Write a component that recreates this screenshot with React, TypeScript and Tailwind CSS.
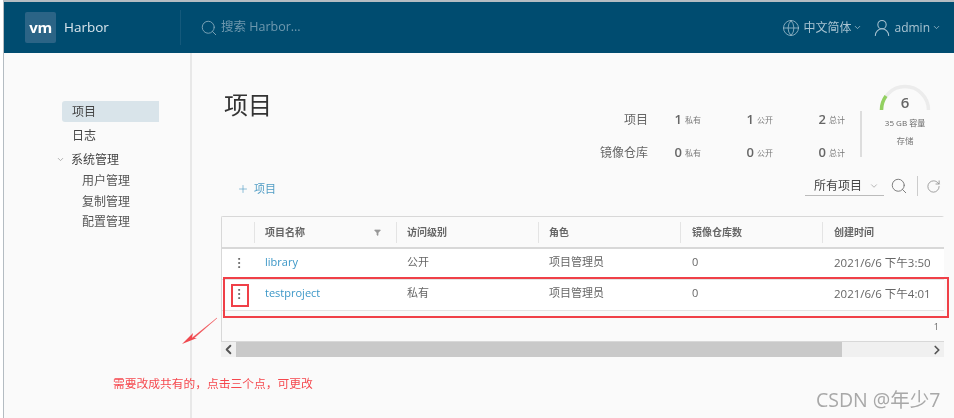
import { ChevronDown, ChevronLeft, ChevronRight, EllipsisVertical, Filter, Globe, Plus, RotateCw, Search, UserRound } from 'lucide-react';

const FONT = "font-['Open_Sans','Noto_Sans_CJK_SC',sans-serif]";

const COLS = ['w-[32px]', 'w-[142px]', 'w-[142px]', 'w-[142px]', 'w-[142px]', 'w-[122px]'];

const HEADERS = ['', '项目名称', '访问级别', '角色', '镜像仓库数', '创建时间'];

const ROWS = [
  { name: 'library', level: '公开', time: '2021/6/6 下午3:50' },
  { name: 'testproject', level: '私有', time: '2021/6/6 下午4:01' },
];

function StatRow({ label, values }: { label: string; values: [string, string, string] }) {
  const units = ['私有', '公开', '总计'];
  return (
    <div className="flex h-[33px] items-center">
      <span className="w-[64px] text-right text-[12px] text-[#666]">{label}</span>
      <div className="ml-[22px] flex">
        {values.map((v, i) => (
          <div key={units[i]} className="flex w-[72px] items-center">
            <span className="w-[12px] text-right text-[13px] font-semibold leading-none text-[#666]">{v}</span>
            <span className="ml-[3px] text-[8px] text-[#777]">{units[i]}</span>
          </div>
        ))}
      </div>
    </div>
  );
}

function SideItem({ label, active }: { label: string; active?: boolean }) {
  return (
    <div className={`flex h-[21px] w-[97px] items-center rounded-l-[3px] pl-[10px] text-[12px] text-[#444] ${active ? 'bg-[#d9e4ea]' : ''}`}>
      {label}
    </div>
  );
}

export default function App() {
  return (
    <div className={`relative h-[418px] w-[954px] overflow-hidden bg-white pl-[3px] blur-[0.45px] ${FONT}`}>
      <div className="flex h-full flex-col border-l border-t-2 border-[#b4bcc2] bg-[#fafafa]">
        <header className="flex h-[51px] shrink-0 items-center bg-[#004c70] pl-[21px] pr-[13px]">
          <div className="flex h-[31px] w-[31px] items-center justify-center rounded-[2px] bg-[#2b6486]">
            <span className="text-[15px] font-bold leading-none tracking-[-0.3px] text-white">vm</span>
          </div>
          <span className="ml-[8px] w-[116px] text-[13.5px] text-[#dbe7ee]">Harbor</span>
          <div className="h-[35px] w-px bg-[#14597b]" />
          <Search className="ml-[19px] h-[18px] w-[18px] text-[#7ea4b8]" strokeWidth={1.25} />
          <span className="ml-[3px] text-[12.5px] text-[#6e98ae]">搜索 Harbor...</span>
          <div className="ml-auto flex items-center text-[#a9c4d2]">
            <Globe className="h-[18px] w-[18px]" strokeWidth={1} />
            <span className="ml-[3px] text-[12px]">中文简体</span>
            <ChevronDown className="ml-[2px] h-[9px] w-[9px]" />
            <UserRound className="ml-[10px] h-[20px] w-[20px]" strokeWidth={1.25} />
            <span className="ml-[2px] text-[12px]">admin</span>
            <ChevronDown className="ml-[2px] h-[9px] w-[9px]" />
          </div>
        </header>

        <div className="flex min-h-0 flex-1">
          <aside className="w-[186px] shrink-0 pl-[58px] pt-[48px]">
            <SideItem label="项目" active />
            <div className="mt-[3px]">
              <SideItem label="日志" />
            </div>
            <div className="mt-[3px] flex h-[21px] items-center">
              <ChevronDown className="-ml-[6px] h-[9px] w-[9px] text-[#999]" />
              <span className="ml-[6px] text-[12px] text-[#444]">系统管理</span>
            </div>
            <div className="mt-[1px] flex flex-col pl-[20px] text-[12px] leading-[20.5px] text-[#555]">
              <span>用户管理</span>
              <span>复制管理</span>
              <span>配置管理</span>
            </div>
          </aside>

          <main className="min-w-0 flex-1 border-l-2 border-[#e8e8e8] pl-[29px] pr-[10px]">
            <div className="flex h-[118px]">
              <h1 className="ml-[3px] mt-[34px] w-[200px] text-[24px] leading-[36px] text-[#333]">项目</h1>
              <div className="ml-[160px] mt-[50px] self-start">
                <StatRow label="项目" values={['1', '1', '2']} />
                <StatRow label="镜像仓库" values={['0', '0', '0']} />
              </div>
              <div className="-ml-[26px] mt-[58px] h-[46px] w-[2px] bg-[#ddd]" />
              <div className="ml-[13px] mt-[31px] flex w-[60px] flex-col items-center">
                <div className="relative h-[26px] w-[52px]">
                  <svg viewBox="0 0 52 26" className="h-[26px] w-[52px]" fill="none">
                    <path d="M2.5 26a23.5 23.5 0 0 1 47 0" stroke="#ececec" strokeWidth="3.5" />
                    <path d="M2.5 26a23.5 23.5 0 0 1 4.5 -14" stroke="#92d060" strokeWidth="3.5" />
                  </svg>
                  <span className="absolute inset-x-0 top-[11px] text-center text-[15px] font-semibold leading-[15px] text-[#666]">6</span>
                </div>
                <span className="mt-[7px] whitespace-nowrap text-[8px] text-[#666]">35 GB 容量</span>
                <span className="mt-[6px] text-[8.5px] text-[#777]">存储</span>
              </div>
            </div>

            <div className="flex h-[45px] items-start">
              <button className="mt-[10px] flex items-center pl-[16px] text-[#4f9cc4]">
                <Plus className="h-[12px] w-[12px]" strokeWidth={1.25} />
                <span className="ml-[5px] text-[11px]">项目</span>
              </button>
              <div className="ml-auto mr-[3px] mt-[5px] flex items-center">
                <div className="flex h-[19px] w-[79px] items-center justify-between border-b border-[#bbb] pl-[9px] pr-[5px]">
                  <span className="text-[12px] text-[#444]">所有项目</span>
                  <ChevronDown className="h-[10px] w-[10px] text-[#aaa]" />
                </div>
                <Search className="ml-[6px] h-[18px] w-[18px] text-[#777]" strokeWidth={1.25} />
                <div className="ml-[9px] h-[20px] w-px bg-[#ccc]" />
                <RotateCw className="ml-[8px] h-[15px] w-[15px] text-[#888]" strokeWidth={1.25} />
              </div>
            </div>

            <section className="w-[723px]">
              <div className="rounded-t-[2px] border-b border-l border-t border-[#d8d8d8]">
                <div className="flex h-[32px] items-center border-b-2 border-[#d8d8d8] bg-[#fafafa]">
                  {HEADERS.map((h, i) => (
                    <div key={i} className={`${COLS[i]} flex h-[21px] shrink-0 items-center justify-between pr-[12px] text-[10px] font-semibold text-[#666] ${i > 3 ? 'pl-[11px]' : 'pl-[10px]'} ${i > 0 ? 'border-l border-[#e4e4e4]' : ''}`}>
                      <span>{h}</span>
                      {i === 1 && <Filter className="mr-[3px] h-[7px] w-[7px] fill-[#999] text-[#999]" />}
                    </div>
                  ))}
                </div>
                {ROWS.map((r) => (
                  <div key={r.name} className="flex h-[31px] items-center border-b border-[#e4e4e4] bg-white pb-[3px] text-[11px] text-[#666] first:border-white">
                    <div className={`${COLS[0]} flex shrink-0 justify-center`}>
                      <EllipsisVertical className="ml-[1px] h-[14px] w-[14px] text-[#555]" strokeWidth={1.5} />
                    </div>
                    <div className={`${COLS[1]} shrink-0 pl-[11px] text-[#3c97c7]`}>{r.name}</div>
                    <div className={`${COLS[2]} shrink-0 pl-[11px]`}>{r.level}</div>
                    <div className={`${COLS[3]} shrink-0 pl-[11px]`}>项目管理员</div>
                    <div className={`${COLS[4]} shrink-0 pl-[12px]`}>0</div>
                    <div className={`${COLS[5]} shrink-0 whitespace-nowrap pl-[12px] text-[11.5px]`}>{r.time}</div>
                  </div>
                ))}
                <div className="h-[30px] pr-[5px] pt-[9px] text-right text-[9px] leading-[13px] text-[#666]">1</div>
              </div>
              <div className="flex h-[15px] items-center bg-[#f0f0f0]">
                <ChevronLeft className="h-[15px] w-[15px] shrink-0 text-[#555]" strokeWidth={3} />
                <div className="h-full w-[606px] shrink-0 bg-[#c9c9c9]" />
                <ChevronRight className="ml-auto h-[14px] w-[14px] text-[#555]" strokeWidth={3} />
              </div>
            </section>
          </main>
        </div>
      </div>

      <div className="absolute left-[223px] top-[277px] h-[41px] w-[726px] border-2 border-[#f04048]" />
      <div className="absolute left-[231px] top-[284px] h-[23px] w-[18px] border-2 border-[#f04048]" />
      <svg className="absolute left-[180px] top-[315px] h-[32px] w-[40px]" viewBox="0 0 40 32" fill="none">
        <path d="M37 3 12 23 13 24Z" fill="#f0484e" stroke="#f0484e" strokeWidth="0.4" />
        <path d="M2 29 13 18 12 23 17 23Z" fill="#f0484e" />
      </svg>
      <span className="absolute left-[113px] top-[375px] text-[11.75px] leading-[16px] text-[#f5484e]">{'需要改成共有的\uFF0C点击三个点\uFF0C可更改'}</span>
      <span className="absolute left-[816px] top-[387px] text-[19.5px] leading-[26px] text-[#a8a8a8]">CSDN @年少7</span>
    </div>
  );
}
